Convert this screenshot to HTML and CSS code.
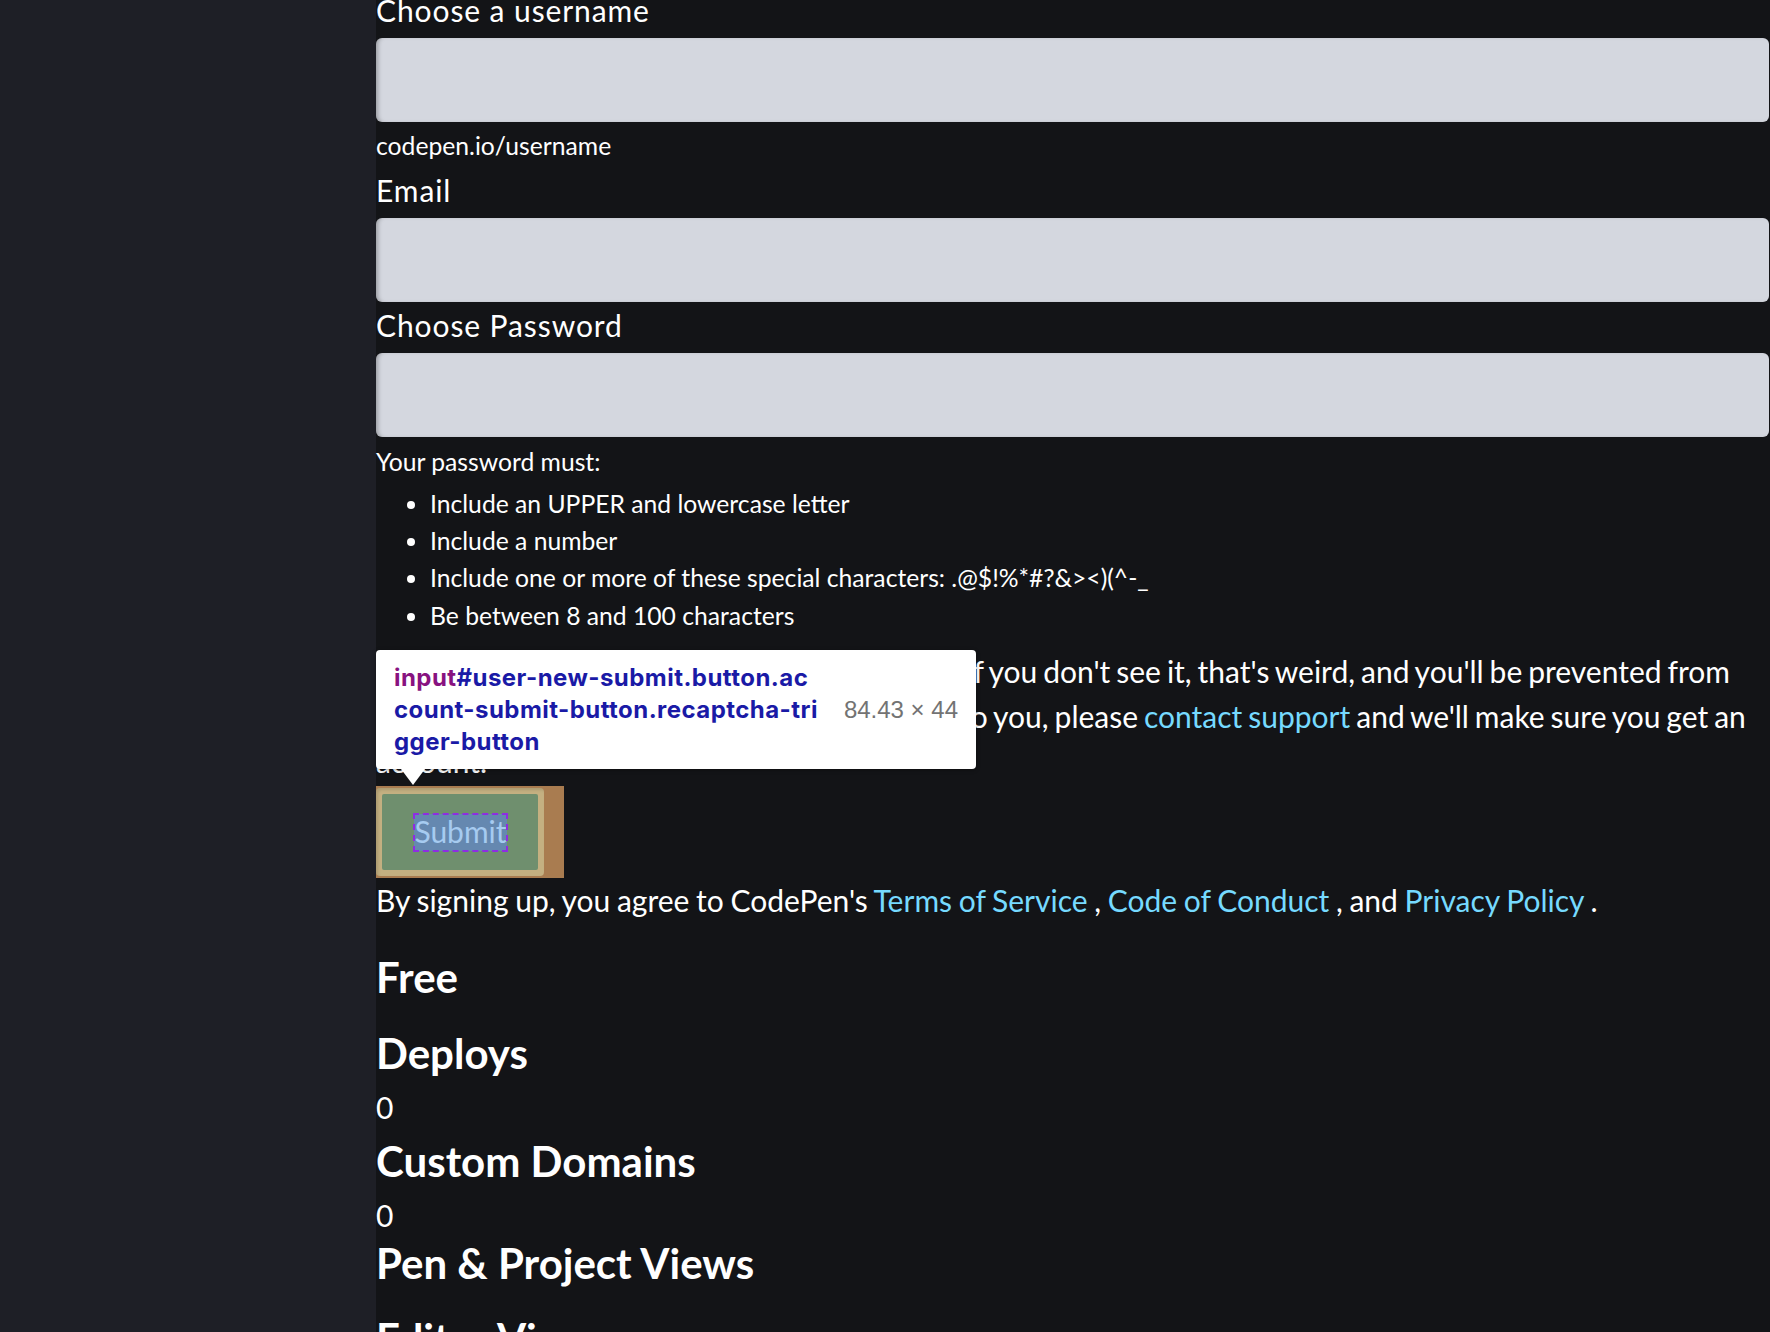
FILE: index.html
```html
<!DOCTYPE html>
<html lang="en">
<head>
<meta charset="utf-8">
<title>Sign Up for CodePen</title>
<link rel="stylesheet" href="styles.css">
</head>
<body>
<div class="page">
  <aside class="sidebar"></aside>
  <main class="main">
    <form class="signup">
      <label class="field-label" for="username">Choose a username</label>
      <input class="field-input" id="username" type="text">
      <div class="hint">codepen.io/username</div>

      <label class="field-label field-label--email" for="email">Email</label>
      <input class="field-input" id="email" type="email">

      <label class="field-label field-label--pass" for="password">Choose Password</label>
      <input class="field-input" id="password" type="password">

      <p class="rules-title">Your password must:</p>
      <ul class="rules">
        <li>Include an UPPER and lowercase letter</li>
        <li>Include a number</li>
        <li>Include one or more of these special characters: .@$!%*#?&amp;&gt;&lt;)(^-_</li>
        <li>Be between 8 and 100 characters</li>
      </ul>

      <p class="notice">We'll be asking you to run a reCAPTCHA test. If you don't see it, that's weird, and you'll be prevented from signing up. If that's the case and this happens to you, please <a href="#">contact support</a> and we'll make sure you get an account.</p>

      <div class="submit-row">
        <div class="hl-margin">
          <div class="hl-border">
            <div class="hl-padding">
              <span class="hl-content">Submit</span>
            </div>
          </div>
        </div>
        <div class="inspect-tip">
          <div class="inspect-selector"><span class="tag">input</span>#user-new-submit.button.ac<br>count-submit-button.recaptcha-tri<br>gger-button</div>
          <div class="inspect-size">84.43 × 44</div>
          <span class="inspect-arrow"></span>
        </div>
      </div>

      <p class="terms">By signing up, you agree to CodePen's <a href="#">Terms of Service</a> , <a href="#">Code of Conduct</a> , and <a href="#">Privacy Policy</a> .</p>
    </form>

    <h2 class="plan-name">Free</h2>
    <dl class="stats">
      <div class="stat stat--first">
        <dt>Deploys</dt>
        <dd>0</dd>
      </div>
      <div class="stat">
        <dt>Custom Domains</dt>
        <dd>0</dd>
      </div>
      <div class="stat stat--tight">
        <dt>Pen &amp; Project Views</dt>
      </div>
      <div class="stat stat--after-empty">
        <dt>Editor Views</dt>
        <dd>0</dd>
      </div>
    </dl>
  </main>
</div>
</body>
</html>
```
FILE: styles.css
```css
* { box-sizing: border-box; }

html, body {
  margin: 0;
  padding: 0;
  background: #131417;
  height: 100%;
  overflow: hidden;
}

body {
  font-family: Lato, "Liberation Sans", sans-serif;
  color: #ffffff;
}

.page {
  display: flex;
  min-height: 100vh;
}

.sidebar {
  width: 376px;
  flex: 0 0 376px;
  background: #1e1f26;
}

.main {
  flex: 1;
  min-width: 0;
  padding-right: 1px;
  background: #131417;
}

.signup {
  margin-top: -8px;
}

.field-label {
  display: block;
  font-size: 30px;
  line-height: 36px;
  margin: 0 0 10px;
  letter-spacing: 0.9px;
}

.field-label--email { margin-top: 8px; }
.field-label--pass { margin-top: 5px; }

.field-input {
  display: block;
  width: 100%;
  height: 84px;
  margin: 0;
  border: 0;
  border-radius: 6px;
  background: #d4d7df;
  box-shadow: inset 4px 0 4px -2px rgba(0, 0, 0, 0.28);
  font: inherit;
}

.hint {
  margin-top: 6px;
  font-size: 24.7px;
  line-height: 36px;
}

.rules-title {
  margin: 7px 0 0;
  font-size: 24.7px;
  line-height: 36px;
}

.rules {
  margin: 4.5px 0 0;
  padding-left: 54px;
  font-size: 24.7px;
  line-height: 37.4px;
}

.notice {
  margin: 15px 0 0;
  font-size: 30px;
  line-height: 45px;
  word-spacing: -1.75px;
}

a {
  color: #76daff;
  text-decoration: none;
}

.submit-row {
  position: relative;
  margin-top: 2px;
}

.hl-margin {
  display: inline-block;
  vertical-align: top;
  background: #a97c50;
  padding: 2px 20px 2px 0;
}

.hl-border {
  background: #c4b081;
  padding: 6px;
  border-radius: 4px;
  box-shadow: inset 2px 2px 3px rgba(0, 0, 0, 0.12);
}

.hl-padding {
  background: #6f8f6e;
  padding: 20px 31px 19px 32px;
  border-radius: 2px;
}

.hl-content {
  display: block;
  width: 93px;
  height: 37px;
  background: #6588b0;
  outline: 2px dashed #8e2de2;
  outline-offset: -1px;
  color: #a6cbf0;
  font-size: 30px;
  line-height: 34px;
  text-align: center;
}

.inspect-tip {
  position: absolute;
  left: 0;
  bottom: calc(100% + 17px);
  width: 600px;
  height: 119px;
  padding: 12px 18px 11px;
  background: #ffffff;
  border-radius: 4px;
  box-shadow: 0 1px 4px rgba(0, 0, 0, 0.35);
  display: flex;
  justify-content: space-between;
  align-items: center;
  font-family: Inter, "Liberation Sans", sans-serif;
  font-size: 24px;
  line-height: 32px;
}

.inspect-selector {
  color: #1a1aa6;
  font-weight: 700;
  letter-spacing: 0.45px;
}

.inspect-selector .tag {
  color: #881280;
}

.inspect-size {
  color: #737373;
  font-family: "Liberation Sans", Arial, sans-serif;
  font-weight: 400;
}

.inspect-arrow {
  position: absolute;
  left: 25px;
  top: 100%;
  width: 0;
  height: 0;
  border-left: 12px solid transparent;
  border-right: 12px solid transparent;
  border-top: 16px solid #ffffff;
}

.terms {
  margin: 0;
  font-size: 30px;
  line-height: 45px;
  word-spacing: -1px;
}

.plan-name {
  margin: 29px 0 0;
  font-size: 42px;
  line-height: 50px;
  font-weight: 700;
}

.stats {
  margin: 0;
}

.stat {
  margin-top: 6px;
}

.stat--first { margin-top: 26px; }
.stat--tight { margin-top: 0; }
.stat--after-empty { margin-top: 25px; }

.stat dt {
  font-size: 42px;
  line-height: 50px;
  font-weight: 700;
}

.stat dd {
  margin: 7px 0 0;
  font-size: 30px;
  line-height: 45px;
}
```
